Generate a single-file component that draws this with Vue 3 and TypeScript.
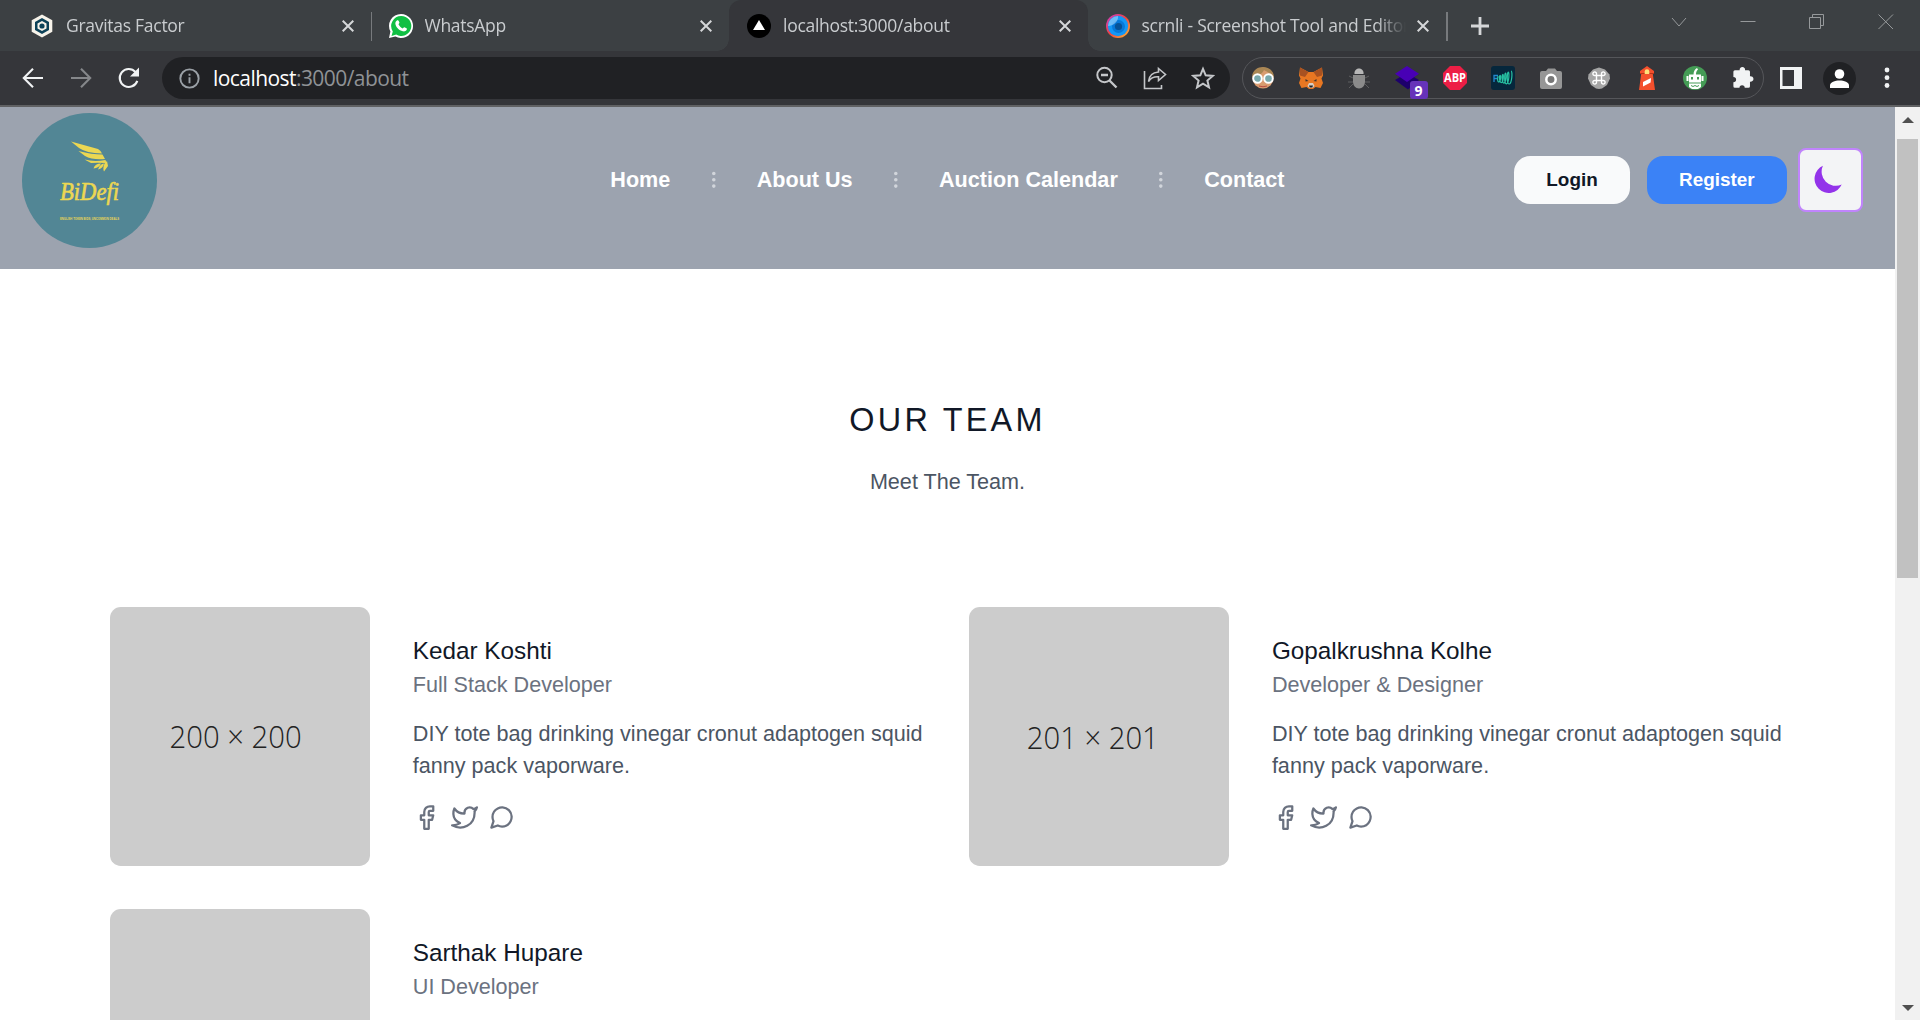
<script setup lang="ts">
interface Tab {
  id: string
  title: string
  active?: boolean
  divider?: boolean
}

interface Photo {
  label: string
  x: number
  y: number
  width: number
}

interface Member {
  name: string
  role: string
  photo?: Photo
  blurb?: string
}

const tabs: Tab[] = [
  { id: 'gravitas', title: 'Gravitas Factor', divider: true },
  { id: 'whatsapp', title: 'WhatsApp' },
  { id: 'local', title: 'localhost:3000/about', active: true },
  { id: 'scrnli', title: 'scrnli - Screenshot Tool and Editor', divider: true },
]

const links: string[] = ['Home', 'About Us', 'Auction Calendar', 'Contact']

const blurb = 'DIY tote bag drinking vinegar cronut adaptogen squid fanny pack vaporware.'

const members: Member[] = [
  { name: 'Kedar Koshti', role: 'Full Stack Developer', photo: { label: '200 × 200', x: 125.3, y: 140.5, width: 132 }, blurb },
  { name: 'Gopalkrushna Kolhe', role: 'Developer & Designer', photo: { label: '201 × 201', x: 123.5, y: 141.5, width: 132 }, blurb },
  { name: 'Sarthak Hupare', role: 'UI Developer' },
]
</script>

<template>
  <div class="window">
    <div class="tabstrip">
      <div v-for="tab in tabs" :key="tab.id" class="tab" :class="{ active: tab.active, divider: tab.divider }">
        <svg v-if="tab.id === 'gravitas'" class="fav" viewBox="0 0 24 24">
          <path d="M12 .5 22.3 6.3v11.4L12 23.5 1.7 17.7V6.3z" fill="#f7f3ea" />
          <path d="M12 4 19 8v8l-7 4-7-4V8z" fill="#0d4258" />
          <path d="M12 7 16.5 9.5v5L12 17l-4.500-2.500v-5z" fill="#f7f3ea" />
          <circle cx="12" cy="12" r="2.600" fill="#0d4258" />
        </svg>
        <svg v-else-if="tab.id === 'whatsapp'" class="fav" viewBox="0 0 24 24">
          <path d="M12 0a12 12 0 1 1-5.600 22.600L0 24l1.400-6.400A12 12 0 0 1 12 0z" fill="#fff" />
          <path d="M12.200 2a10 10 0 1 1-5 18.600L2.500 22l1.300-4.600A10 10 0 0 1 12.200 2z" fill="#10bf43" />
          <path d="M8.200 6.300c.5-.3 1.100-.2 1.400.4l.8 1.900c.2.500-.5 1.200-.9 1.700.9 1.900 2.300 3.300 4.300 4.100.5-.5 1-1.400 1.600-1.200l2.100 1c.5.3.4 1.200.1 1.800-.7 1.200-2.300 1.700-3.800 1.300-3.900-1-6.700-3.900-7.400-7.300-.2-1.500.6-3 1.800-3.700z" fill="#fff" />
        </svg>
        <svg v-else-if="tab.id === 'local'" class="fav" viewBox="0 0 24 24">
          <circle cx="12" cy="12" r="12" fill="#000" />
          <path d="M12 6 18 16H6z" fill="#fff" />
        </svg>
        <svg v-else class="fav" viewBox="0 0 24 24">
          <defs>
            <linearGradient id="ring" x1="0" y1="0" x2="1" y2="1">
              <stop offset="0" stop-color="#c63bd0" />
              <stop offset=".5" stop-color="#f0443e" />
              <stop offset="1" stop-color="#ffc233" />
            </linearGradient>
          </defs>
          <circle cx="12" cy="12" r="12" fill="url(#ring)" />
          <circle cx="12" cy="12" r="10.200" fill="#1497f5" />
          <circle cx="12.500" cy="12.500" r="6.500" fill="#0878d8" />
          <circle cx="12.500" cy="12.500" r="3.600" fill="#075297" />
          <path d="M2 12A10 10 0 0 1 12 2c1 4-4 10-10 10z" fill="#8cc8f7" opacity=".75" />
        </svg>
        <span class="tab-title">{{ tab.title }}</span>
        <svg class="tab-close" viewBox="0 0 12 12"><path d="M.7.7l10.600 10.600M11.300.7.7 11.300" /></svg>
      </div>
      <svg class="plus" viewBox="0 0 18 18"><path d="M9 0v18M0 9h18" /></svg>
      <div class="controls">
        <svg viewBox="0 0 16 16"><path d="M1 4l7 8 7-8" /></svg>
        <svg viewBox="0 0 16 16"><path d="M.5 7.500h15" /></svg>
        <svg viewBox="0 0 16 16"><path d="M.5 3.500h11v11H.5zM3.500 3V.500h11v11H12" /></svg>
        <svg viewBox="0 0 16 16"><path d="M.5.5l14.500 14.500M15 .5.5 15" /></svg>
      </div>
    </div>

    <div class="toolbar">
      <div class="nav-icons">
        <svg viewBox="0 0 24 24" class="line light"><path d="M22 12H3M12 2.800 2.800 12 12 21.200" /></svg>
        <svg viewBox="0 0 24 24" class="line dim"><path d="M2 12h19M12 2.800 21.200 12 12 21.200" /></svg>
        <svg viewBox="0 0 24 24" class="line light">
          <path d="M20.300 14.800A9 9 0 1 1 18.500 6" />
          <path d="M22 1.500v9h-9z" fill="#f1f3f4" stroke="none" />
        </svg>
      </div>
      <div class="omnibox">
        <svg class="info" viewBox="0 0 22 22">
          <circle cx="11" cy="11" r="9.600" fill="none" stroke="#9aa0a6" stroke-width="2" />
          <path d="M10 9.700h2v6.300h-2zM10 6h2v2h-2z" fill="#9aa0a6" />
        </svg>
        <span class="url"><b>localhost</b>:3000/about</span>
        <svg class="act" viewBox="0 0 24 24"><circle cx="9.500" cy="9" r="7.200" /><path d="M6 9h7M14.500 14.500 21.500 21.500" stroke-width="2.400" /></svg>
        <svg class="act thin" viewBox="0 0 24 24"><path d="M1.500 5v17.500h17V19M15.500 2.500 22.500 8.500l-7 6v-3.700c-5-.3-8 1.500-10 4.700.5-5.500 4-9 10-9.500z" /></svg>
        <svg class="act" viewBox="0 0 24 24"><path d="M12 2.800l2.700 6.500 7 .6-5.300 4.600 1.600 6.800-6-3.600-6 3.600 1.600-6.800L2.300 9.900l7-.6z" /></svg>
      </div>
      <div class="extensions">
        <svg viewBox="0 0 24 24">
          <circle cx="12" cy="12" r="10.500" fill="#d99c70" />
          <path d="M1 11.500C1 4 7 1 12 1s11 3 11 10.500l-3-2c-1-3-4-3.500-7-5.500-2 4-6 6-9 6z" fill="#a98654" />
          <circle cx="6.500" cy="12.500" r="4.300" fill="#79a9ad" stroke="#fff" stroke-width="1.900" />
          <circle cx="17.500" cy="12.500" r="4.300" fill="#79a9ad" stroke="#fff" stroke-width="1.900" />
          <path d="M8 20q4 1.500 8 0" stroke="#b94d43" fill="none" />
        </svg>
        <svg viewBox="0 0 24 24">
          <path d="M1 1.500 9.500 6h5L23 1.500l1 8-1.500 3L24 17l-2.500 5-5-1-2.500 2h-4l-2.500-2-5 1L0 17l1.500-4.500L0 9.500z" fill="#e87722" />
          <path d="M1 1.500 9.500 6 6 11 1 9.500zM23 1.500 14.500 6l3.500 5 5-1.500z" fill="#a85221" />
          <path d="M6.500 13l3 2-3 .5zM17.500 13l-3 2 3 .5z" fill="#3c332d" />
          <path d="M8.500 20 10 17h4l1.500 3-2 2h-3z" fill="#d9cdc3" />
          <path d="M10 19.500h4l-.7 2h-2.600z" fill="#222" />
        </svg>
        <svg viewBox="0 0 24 24">
          <path d="M2 10l4 2M22 10l-4 2M2 22l4-4M22 22l-4-4M1 16h5M23 16h-5" stroke="#5e5e60" fill="none" />
          <path d="M7.500 8C7 5 9 2.500 12 2.500S17 5 16.500 8z" fill="#b7b7b7" />
          <path d="M6 9h12v6.500c0 4-2.500 7-6 7s-6-3-6-7z" fill="#8b8b8b" />
        </svg>
        <span class="stack">
          <svg viewBox="0 0 24 24"><path d="M0 14l12-7 12 7-11 9.500z" fill="#1d006b" /><path d="M0 7.800 12 0l12 7.800L12 16z" fill="#4800b5" /></svg>
          <span class="badge">9</span>
        </span>
        <svg viewBox="0 0 24 24">
          <path d="M7 0h10l7 7v10l-7 7H7l-7-7V7z" fill="#ed1e45" />
          <text x="12" y="16.400" text-anchor="middle" class="abp" textLength="22" lengthAdjust="spacingAndGlyphs">ABP</text>
        </svg>
        <svg viewBox="0 0 24 24">
          <rect width="24" height="24" rx="3" fill="#06273c" />
          <path d="M3 16V9.500h4M3 12.500h3.500" stroke="#2389cf" stroke-width="1.300" fill="none" />
          <path d="M7 10c-1 4 0 7 1.500 5.500S10 9 9 9.500s-.5 7.500 1.500 7S12.800 8 11.800 8.500s-1 9 1.200 8.500S15.500 7 14.500 7.200s-1.500 11 1 10.600S18.500 6 17.300 6s-1.800 12.500.9 12 3.600-13 1.800-13" fill="none" stroke="#28c3a4" stroke-width="1.200" />
        </svg>
        <svg viewBox="0 0 24 24">
          <path d="M3 5h4l2-2.500h7L18 5h3a2 2 0 0 1 2 2v14a2 2 0 0 1-2 2H3a2 2 0 0 1-2-2V7a2 2 0 0 1 2-2z" fill="#969696" />
          <circle cx="12" cy="13.500" r="4.700" fill="#777" stroke="#fff" stroke-width="2.500" />
        </svg>
        <svg viewBox="0 0 24 24">
          <path d="M12 1.500 18 3.500l4.500 5 .5 4-3 6.500-5 3.500-3 .5-3-.5L4 19l-3-6.500.5-4L6 3.500z" fill="#a5a5a5" />
          <path d="M9.500 9.500h5v5h-5zM9.500 9.500V7.800a1.800 1.800 0 1 0-1.800 1.700zM14.500 9.500V7.800a1.800 1.800 0 1 1 1.800 1.700zM9.500 14.500v1.700a1.800 1.800 0 1 1-1.800-1.700zM14.500 14.500v1.700a1.800 1.800 0 1 0 1.800-1.700z" fill="none" stroke="#fff" stroke-width="1.400" />
        </svg>
        <svg viewBox="0 0 24 24">
          <path d="M12 0 19 5v3h-1.200L20 24H4L6.200 8H5V5z" fill="#f4502d" />
          <path d="M5 7.500h14" stroke="#b93318" />
          <path d="M9.700 8V5.500a2.300 2.300 0 0 1 4.600 0V8z" fill="#ffe17a" />
          <path d="M8 16l8-4-.4 4.500L8 20.500z" fill="#fff" />
        </svg>
        <svg viewBox="0 0 24 24">
          <circle cx="12" cy="12" r="12" fill="#459c56" />
          <path d="M6 8.500h4.500c0-3 1.500-5.500 3.500-6.500l1 1.500c-1.500 1-2 3-2 5h5v8H6z" fill="#fff" />
          <path d="M3.500 10h2v5h-2zM18.500 10h2v5h-2zM6 17.500h12v3.500l-3 2H9l-3-2z" fill="#fff" />
          <path d="M8 11h2v2.500H8zM14 11h2v2.500h-2z" fill="#459c56" />
          <path d="M8 19.500l2 1 2-1 2 1 2-1" stroke="#459c56" fill="none" />
        </svg>
        <svg viewBox="0 0 24 24">
          <path d="M3.200 4.500h4.500a2.600 2.600 0 1 1 5.100 0H16a1.500 1.500 0 0 1 1.500 1.500v4.500a2.800 2.800 0 1 1 0 5.500v4.500A1.500 1.500 0 0 1 16 22h-3.500a2.500 2.500 0 0 0-5 0H3.200a1.500 1.500 0 0 1-1.500-1.500V16.500a2.600 2.600 0 0 0 0-5.200V6a1.500 1.500 0 0 1 1.500-1.500z" fill="#f1f3f4" transform="translate(.6 -.3) scale(1.050 1)" />
        </svg>
      </div>
      <svg class="side" viewBox="0 0 22 22"><path d="M0 0h22v22H0zM2.500 3v16H14V3z" fill="#f1f3f4" fill-rule="evenodd" /></svg>
      <svg class="avatar" viewBox="0 0 33 33">
        <circle cx="16.500" cy="16.500" r="16.500" fill="#202124" />
        <circle cx="16.500" cy="12" r="4.800" fill="#fff" />
        <path d="M7 26v-2.500C7 20 12 18.500 16.500 18.500S26 20 26 23.500V26z" fill="#fff" />
      </svg>
      <svg class="kebab" viewBox="0 0 6 22"><g fill="#f1f3f4"><circle cx="3" cy="3" r="2.400" /><circle cx="3" cy="10.700" r="2.400" /><circle cx="3" cy="18.500" r="2.400" /></g></svg>
    </div>

    <div class="viewport">
      <div class="page">
        <header class="header">
          <div class="logo">
            <svg viewBox="0 0 135 135">
              <circle cx="67.500" cy="67.500" r="67.500" fill="#528695" />
              <g fill="#ebd752">
                <path d="M49 28.500 76 36q3 1.500 4 4.500Q64 40 57 35z" />
                <path d="M56.500 38Q70 41.500 80.500 41.500L83 46Q70 47 63 43z" />
                <path d="M62.500 46.500Q72 49 83.500 47l1 3Q75 49.500 69 50z" />
                <path d="M71.500 55.500Q73 50.500 79 50.500 77 55 71.500 55.500zM76 56.500Q78 51 82 50.500 81 55.500 76 56.500zM82.500 50.500 85 48l1 5-4 5.500q-1.500-3 .5-8z" />
              </g>
              <text x="38" y="86.500" class="brand" textLength="59" lengthAdjust="spacingAndGlyphs">BiDefi</text>
              <text x="38" y="106.500" class="tagline" textLength="59" lengthAdjust="spacingAndGlyphs">ENGLISH TOKEN BIDS, UNCOMMON DEALS</text>
            </svg>
          </div>
          <nav class="links">
            <template v-for="(link, i) in links" :key="link">
              <svg v-if="i > 0" class="dots" viewBox="0 0 24 24"><path d="M12 5v0m0 7v0m0 7v0m0-13a1 1 0 110-2 1 1 0 010 2zm0 7a1 1 0 110-2 1 1 0 010 2zm0 7a1 1 0 110-2 1 1 0 010 2z" /></svg>
              <a>{{ link }}</a>
            </template>
          </nav>
          <div class="buttons">
            <button class="login">Login</button>
            <button class="register">Register</button>
            <button class="theme" aria-label="Theme">
              <svg viewBox="0 0 20 20"><path d="M17.293 13.293A8 8 0 016.707 2.707a8.001 8.001 0 1010.586 10.586z" /></svg>
            </button>
          </div>
        </header>

        <section class="team">
          <h1>OUR TEAM</h1>
          <p class="sub">Meet The Team.</p>
          <div class="grid">
            <article v-for="m in members" :key="m.name" class="member">
              <svg class="photo" viewBox="0 0 259 259">
                <text v-if="m.photo" :x="m.photo.x" :y="m.photo.y" text-anchor="middle" :textLength="m.photo.width" lengthAdjust="spacingAndGlyphs">{{ m.photo.label }}</text>
              </svg>
              <div class="bio">
                <h2>{{ m.name }}</h2>
                <h3>{{ m.role }}</h3>
                <template v-if="m.blurb">
                  <p>{{ m.blurb }}</p>
                  <div class="social">
                    <svg viewBox="0 0 24 24"><path d="M18 2h-3a5 5 0 00-5 5v3H7v4h3v8h4v-8h3l1-4h-4V7a1 1 0 011-1h3z" /></svg>
                    <svg viewBox="0 0 24 24"><path d="M23 3a10.900 10.900 0 01-3.140 1.530 4.480 4.480 0 00-7.860 3v1A10.660 10.660 0 013 4s-4 9 5 13a11.640 11.640 0 01-7 2c9 5 20 0 20-11.500a4.500 4.500 0 00-.08-.83A7.720 7.720 0 0023 3z" /></svg>
                    <svg viewBox="0 0 24 24"><path d="M21 11.500a8.380 8.380 0 01-.9 3.800 8.500 8.500 0 01-7.600 4.700 8.380 8.380 0 01-3.800-.9L3 21l1.900-5.700a8.380 8.380 0 01-.9-3.800 8.500 8.500 0 014.700-7.600 8.380 8.380 0 013.800-.9h.5a8.480 8.480 0 018 8v.5z" /></svg>
                  </div>
                </template>
              </div>
            </article>
          </div>
        </section>
      </div>
      <div class="scrollbar">
        <svg viewBox="0 0 12 6"><path d="M6 0 12 6H0z" /></svg>
        <div class="thumb"></div>
        <svg class="down" viewBox="0 0 12 6"><path d="M0 0h12L6 6z" /></svg>
      </div>
    </div>
  </div>
</template>

<style>
body {
  margin: 0;
  overflow: hidden;
}
</style>

<style scoped>
* {
  box-sizing: border-box;
}
svg {
  display: block;
  flex: none;
}
h1, h2, h3, p {
  margin: 0;
  font-weight: 400;
}
.window {
  width: 1920px;
  height: 1020px;
  display: flex;
  flex-direction: column;
  overflow: hidden;
  font-family: "Liberation Sans", Arial, sans-serif;
  background: #fff;
}
.tabstrip {
  height: 51px;
  flex: none;
  display: flex;
  align-items: center;
  padding-left: 12px;
  background: #3c4043;
}
.tab {
  position: relative;
  width: 358.5px;
  height: 51px;
  flex: none;
  display: flex;
  align-items: center;
  padding: 0 17px 0 18px;
}
.tab.active {
  background: #35363a;
  border-radius: 12px 12px 0 0;
}
.tab.active::before,
.tab.active::after {
  content: "";
  position: absolute;
  bottom: 0;
  width: 12px;
  height: 12px;
}
.tab.active::before {
  left: -12px;
  background: radial-gradient(circle at 0 0, transparent 11.5px, #35363a 12px);
}
.tab.active::after {
  right: -12px;
  background: radial-gradient(circle at 100% 0, transparent 11.5px, #35363a 12px);
}
.tab.divider::after {
  content: "";
  position: absolute;
  right: -1.5px;
  top: 12px;
  width: 1.5px;
  height: 29px;
  background: #777a7d;
}
.fav {
  width: 24px;
  height: 24px;
}
.tab-title {
  flex: 1;
  margin: 0 11px 0 12px;
  padding-bottom: 2px;
  overflow: hidden;
  white-space: nowrap;
  font: 17.5px/26px "Open Sans", "Noto Sans", sans-serif;
  letter-spacing: -0.28px;
  color: #c9cccf;
  -webkit-mask-image: linear-gradient(90deg, #000 calc(100% - 30px), transparent);
  mask-image: linear-gradient(90deg, #000 calc(100% - 30px), transparent);
}
.tab-close {
  width: 12px;
  height: 12px;
  fill: none;
  stroke: #d5d7d9;
  stroke-width: 2;
}
.plus {
  width: 18px;
  height: 18px;
  margin-left: 25px;
  fill: none;
  stroke: #d5d7d9;
  stroke-width: 2.8;
}
.controls {
  margin-left: auto;
  display: flex;
  align-self: flex-start;
  gap: 53px;
  padding: 14px 26px 0 0;
}
.controls svg {
  width: 16px;
  height: 16px;
  fill: none;
  stroke: #96999b;
  stroke-width: 1;
}
.toolbar {
  height: 56px;
  flex: none;
  display: flex;
  align-items: center;
  padding: 0 30px 0 21px;
  background: #35363a;
  border-bottom: 2px solid #606163;
}
.nav-icons {
  display: flex;
  gap: 24px;
  width: 141px;
}
.nav-icons svg {
  width: 24px;
  height: 24px;
}
.line {
  fill: none;
  stroke-width: 2.1;
}
.light {
  stroke: #f1f3f4;
}
.dim {
  stroke: #85878a;
}
.omnibox {
  width: 1068px;
  height: 42px;
  flex: none;
  display: flex;
  align-items: center;
  gap: 24px;
  padding: 0 15px 0 17px;
  border-radius: 21px;
  background: #202124;
}
.info {
  width: 21px;
  height: 21px;
  margin-right: -11px;
}
.url {
  flex: 1;
  font: 21px/30px "Open Sans", "Noto Sans", sans-serif;
  letter-spacing: -0.56px;
  color: #8f9296;
}
.url b {
  font-weight: 400;
  color: #fff;
}
.act {
  width: 24px;
  height: 24px;
  fill: none;
  stroke: #c4c6c9;
  stroke-width: 2;
}
.thin {
  stroke-width: 1.6;
}
.extensions {
  width: 522px;
  height: 42px;
  flex: none;
  display: flex;
  align-items: center;
  gap: 24px;
  margin-left: 12px;
  padding-left: 7.5px;
  border: 1.5px solid #55565a;
  border-radius: 21px;
}
.extensions svg {
  width: 24px;
  height: 24px;
}
.stack {
  position: relative;
  flex: none;
}
.badge {
  position: absolute;
  left: 15px;
  top: 15px;
  width: 18px;
  height: 18px;
  border-radius: 3px;
  background: #6633b9;
  color: #fff;
  font: 700 14px/20px "Open Sans", sans-serif;
  text-align: center;
}
.abp {
  font: 700 11.5px "Open Sans", sans-serif;
  fill: #fff;
}
.side {
  width: 22px;
  height: 22px;
  margin-left: 16px;
}
.avatar {
  width: 33px;
  height: 33px;
  margin-left: 21px;
}
.kebab {
  width: 6px;
  height: 22px;
  margin-left: 28px;
}
.viewport {
  flex: 1;
  min-height: 0;
  display: flex;
}
.page {
  width: 1895px;
  overflow: hidden;
}
.header {
  height: 162px;
  display: flex;
  justify-content: space-between;
  align-items: flex-start;
  padding: 6px 32px 0 22px;
  background: #9ca3af;
}
.logo,
.logo svg {
  width: 135px;
  height: 135px;
}
.logo {
  margin-right: 453.3px;
}
.brand {
  font: italic 400 24.5px "Liberation Serif", serif;
  fill: #ebd752;
  stroke: #ebd752;
  stroke-width: 0.6px;
}
.tagline {
  font: 700 3.4px "Liberation Sans", sans-serif;
  fill: #ebd752;
}
.links {
  display: flex;
  align-items: center;
  gap: 32.4px;
  margin: 51px auto 0 0;
  font-size: 21.6px;
  line-height: 32.4px;
  font-weight: 700;
  color: #fff;
  white-space: nowrap;
}
.dots {
  width: 21.6px;
  height: 21.6px;
  fill: none;
  stroke: #d1d5db;
  stroke-width: 2;
  stroke-linecap: round;
  stroke-linejoin: round;
}
.buttons {
  display: flex;
  align-items: center;
  margin-top: 35px;
}
button {
  padding: 10.3px 32.4px 11.3px;
  border: 0;
  border-radius: 16.2px;
  font: 700 18.9px/27px "Liberation Sans", Arial, sans-serif;
}
.login {
  background: #f9fafb;
  color: #111827;
}
.register {
  margin-left: 16.5px;
  background: #3b82f6;
  color: #fff;
}
.theme {
  width: 65px;
  height: 64px;
  margin-left: 11px;
  padding: 11px 0 0 10.5px;
  display: flex;
  align-items: flex-start;
  border: 2px solid #c084fc;
  border-radius: 8px;
  background: #f3f4f6;
}
.theme svg {
  width: 35.5px;
  height: 35.5px;
  fill: #9333ea;
}
.team {
  width: 1729px;
  margin: 0 auto;
  padding: 129.6px 27px 0;
}
h1 {
  margin-bottom: 22.4px;
  font-size: 32.4px;
  line-height: 43.2px;
  letter-spacing: 3.24px;
  text-align: center;
  color: #111827;
}
.sub {
  font-size: 21.6px;
  line-height: 35.1px;
  text-align: center;
  color: #4b5563;
}
.grid {
  display: grid;
  grid-template-columns: repeat(2, 1fr);
  gap: 42.8px 43.2px;
  margin-top: 107.7px;
}
.member {
  display: flex;
  height: 259.2px;
}
.photo {
  width: 259.6px;
  height: 259.2px;
  border-radius: 10.8px;
  background: #ccc;
}
.photo text {
  font: 300 30.5px "Open Sans", "Noto Sans", sans-serif;
  fill: #222;
}
.bio {
  padding: 24.6px 0 0 43.2px;
}
h2 {
  font-size: 24.3px;
  line-height: 37.8px;
  color: #111827;
}
h3 {
  margin-bottom: 16.2px;
  font-size: 21.6px;
  line-height: 32.4px;
  color: #6b7280;
}
.bio p {
  margin-bottom: 21.4px;
  font-size: 21.6px;
  line-height: 32.4px;
  color: #4b5563;
}
.social {
  display: flex;
  gap: 10.8px;
}
.social svg {
  width: 27px;
  height: 27px;
  fill: none;
  stroke: #6b7280;
  stroke-width: 2;
  stroke-linecap: round;
  stroke-linejoin: round;
}
.scrollbar {
  width: 25px;
  display: flex;
  flex-direction: column;
  align-items: center;
  padding: 10px 0 9px;
  background: #f1f1f1;
}
.scrollbar svg {
  width: 12px;
  height: 6px;
  fill: #505050;
}
.thumb {
  width: 21px;
  height: 439px;
  margin-top: 16px;
  background: #c1c1c1;
}
.scrollbar .down {
  margin-top: auto;
}
</style>
